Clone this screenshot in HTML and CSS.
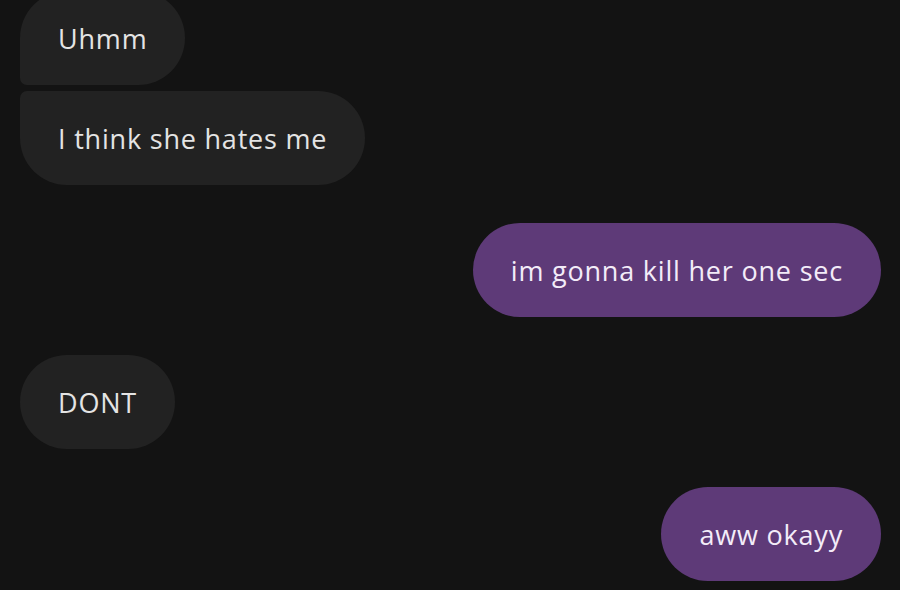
FILE: index.html
```html
<!DOCTYPE html>
<html>
<head>
<meta charset="utf-8">
<link rel="stylesheet" href="styles.css">
</head>
<body>
<div class="thread">
  <div class="group">
    <div class="bubble in first">Uhmm</div>
    <div class="bubble in last">I think she hates me</div>
  </div>
  <div class="bubble out">im gonna kill her one sec</div>
  <div class="bubble in">DONT</div>
  <div class="bubble out">aww okayy</div>
</div>
</body>
</html>
```
FILE: styles.css
```css
html, body {
  margin: 0;
  padding: 0;
  background: #131313;
  width: 900px;
  height: 590px;
  overflow: hidden;
}
.thread {
  display: flex;
  flex-direction: column;
  gap: 38px;
  padding: 0 19px 0 20px;
  margin-top: -9px;
  font-family: "Open Sans", Roboto, sans-serif;
}
.group {
  display: flex;
  flex-direction: column;
  align-items: flex-start;
  gap: 6px;
}
.bubble {
  box-sizing: border-box;
  height: 94px;
  display: flex;
  align-items: center;
  padding: 0 38px 0 38px;
  border-radius: 47px;
  font-size: 27px;
  line-height: 33px;
  letter-spacing: 0.8px;
  white-space: nowrap;
}
.in {
  align-self: flex-start;
  background: #222222;
  color: #e4e4e4;
}
.out {
  align-self: flex-end;
  background: #5e3a78;
  color: #f3ecf8;
}
.first {
  border-bottom-left-radius: 7px;
}
.last {
  border-top-left-radius: 7px;
}
```
